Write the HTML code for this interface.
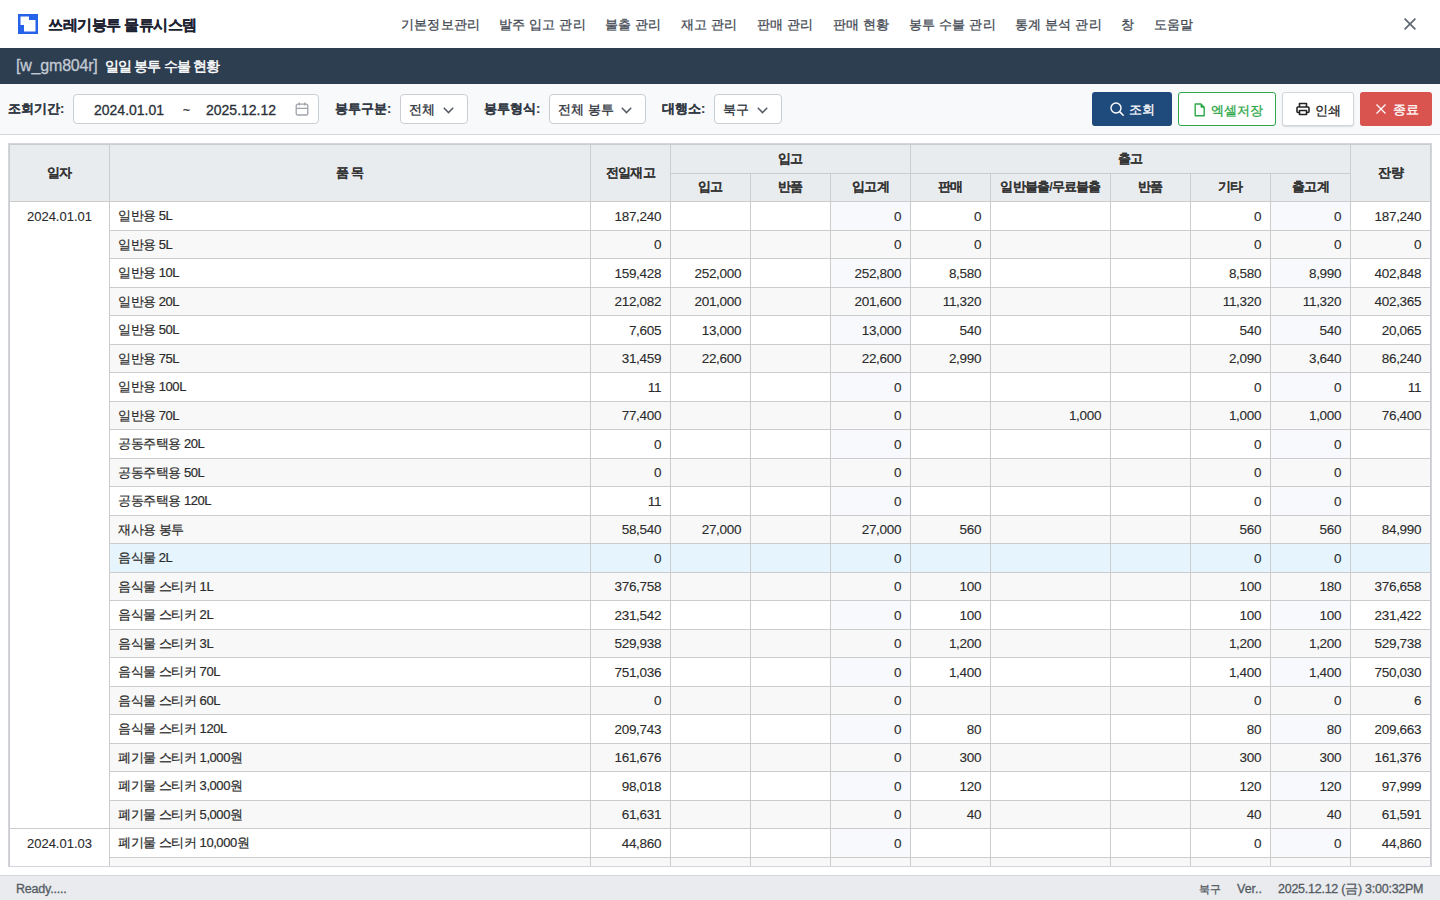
<!DOCTYPE html>
<html lang="ko"><head><meta charset="utf-8"><title>일일 봉투 수불 현황</title>
<style>
*{box-sizing:border-box;margin:0;padding:0}
html,body{width:1440px;height:900px;overflow:hidden;background:#fff;font-family:"Liberation Sans",sans-serif;color:#333}
body{-webkit-text-stroke-width:0.3px}
.top{position:absolute;left:0;top:0;width:1440px;height:48px;background:#fff}
.logo{position:absolute;left:18px;top:14px;width:20px;height:20px}
.brand{position:absolute;left:48px;top:13px;font-size:15px;letter-spacing:-0.5px;font-weight:bold;color:#1c2230;line-height:24px;white-space:nowrap}
.menu{position:absolute;top:13px;font-size:13px;letter-spacing:0.2px;color:#454b55;line-height:24px;white-space:nowrap}
.close{position:absolute;left:1404px;top:18px;width:12px;height:12px}
.bar{position:absolute;left:0;top:48px;width:1440px;height:36px;background:#2c3e50}
.bar .code{position:absolute;left:16px;top:8px;font-size:16px;letter-spacing:-0.2px;color:#c3cad3;line-height:20px;white-space:nowrap}
.bar .ttl{position:absolute;left:105px;top:8px;font-size:14px;letter-spacing:-0.85px;color:#fff;font-weight:normal;-webkit-text-stroke-width:0.45px;line-height:20px;white-space:nowrap}
.tool{position:absolute;left:0;top:84px;width:1440px;height:51px;background:#f8f9fa;border-bottom:1px solid #d5d9de}
.lbl{position:absolute;top:15px;font-size:13px;letter-spacing:0px;font-weight:bold;color:#333a44;line-height:20px;white-space:nowrap}
.box{position:absolute;top:10px;height:30px;background:#fff;border:1px solid #c9cdd4;border-radius:4px}
.txt{position:absolute;top:5px;font-size:13px;color:#2a2f38;line-height:20px;white-space:nowrap}
.chev{position:absolute;top:12px;width:11px;height:7px}
.btn{position:absolute;top:8px;height:34px;border-radius:3px}
.btn span{position:absolute;top:8px;font-size:13px;line-height:20px;white-space:nowrap}
.btn svg{position:absolute}
.grid{position:absolute;left:8px;top:143px;width:1424px;height:724px;border:1px solid #d2d6dc;overflow:hidden;background:#fff}
table{border-collapse:collapse;table-layout:fixed;width:1422px;font-size:13px}
th,td{border:1px solid #cccccc;white-space:nowrap;overflow:hidden}
th{background:#e9ecef;font-weight:bold;font-size:12.5px;letter-spacing:-0.8px;color:#333;text-align:center}
tr.h1 th{height:29px}
tr.h2 th{height:28px}
td{height:28.5px;padding:1px 8px 0 8px;color:#2b2b2b}
td.n{text-align:right;font-size:13.5px;letter-spacing:-0.3px;-webkit-text-stroke-width:0.1px;padding-right:8.8px}
td.it{letter-spacing:-0.45px;-webkit-text-stroke-width:0.2px}
td.dt{-webkit-text-stroke-width:0.1px;text-align:center;vertical-align:top;padding-top:7px;background:#fff}
tr.ev td{background:#f8f8f8}
td.hc{background:#f7f9fc}
tr.ev td.hc{background:#f8f8f9}
tr.sel td{background:#e6f5fd}
tr td.dt{background:#fff}
.status{position:absolute;left:0;top:875px;width:1440px;height:25px;background:#e9ebee;border-top:1px solid #d3d7dc;font-size:12.5px;color:#555b63}
.ready{position:absolute;left:16px;top:4px;line-height:18px;letter-spacing:-0.2px}
.sr span{position:absolute;top:4px;line-height:18px;white-space:nowrap}
.s1{left:1199px;font-size:11px}.s2{left:1237px}.s3{left:1278px;letter-spacing:-0.25px}

.brand,.lbl{-webkit-text-stroke-width:0.15px}
th{-webkit-text-stroke-width:0.01px}

</style></head><body>
<div class="top">
<svg class="logo" viewBox="0 0 20 20"><rect width="20" height="20" fill="#2563eb"/><path d="M2.5 2.5H11V6H17.5V17.5H6V11H2.5Z" fill="#fff"/></svg>
<div class="brand">쓰레기봉투 물류시스템</div>
<div class="menu" style="left:401px">기본정보관리</div>
<div class="menu" style="left:499px">발주 입고 관리</div>
<div class="menu" style="left:605px">불출 관리</div>
<div class="menu" style="left:681px">재고 관리</div>
<div class="menu" style="left:757px">판매 관리</div>
<div class="menu" style="left:833px">판매 현황</div>
<div class="menu" style="left:909px">봉투 수불 관리</div>
<div class="menu" style="left:1015px">통계 분석 관리</div>
<div class="menu" style="left:1121px">창</div>
<div class="menu" style="left:1154px">도움말</div>
<svg class="close" viewBox="0 0 12 12"><path d="M0.6 0.6L11.4 11.4M11.4 0.6L0.6 11.4" stroke="#5d6371" stroke-width="1.6"/></svg>
</div>
<div class="bar"><span class="code">[w_gm804r]</span><span class="ttl">일일 봉투 수불 현황</span></div>
<div class="tool">
<div class="lbl" style="left:8px">조회기간:</div>
<div class="box" style="left:73px;width:246px">
<span class="txt" style="left:20px;font-size:14px">2024.01.01</span>
<span class="txt" style="left:109px;font-size:12px">~</span>
<span class="txt" style="left:132px;font-size:14px">2025.12.12</span>
<svg style="position:absolute;left:221px;top:7px" width="14" height="14" viewBox="0 0 14 14"><rect x="1.2" y="2.2" width="11.6" height="10.8" rx="1.6" fill="none" stroke="#9ea3aa" stroke-width="1.3"/><path d="M1.2 6.3H12.8M4.3 0.6V3.6M9.7 0.6V3.6" stroke="#9ea3aa" stroke-width="1.3"/></svg>
</div>
<div class="lbl" style="left:335px">봉투구분:</div>
<div class="box" style="left:400px;width:68px"><span class="txt" style="left:8px">전체</span><svg class="chev" style="left:42px" viewBox="0 0 11 7"><path d="M0.8 0.8L5.5 5.6L10.2 0.8" fill="none" stroke="#555c66" stroke-width="1.5"/></svg></div>
<div class="lbl" style="left:484px">봉투형식:</div>
<div class="box" style="left:549px;width:97px"><span class="txt" style="left:8px">전체 봉투</span><svg class="chev" style="left:71px" viewBox="0 0 11 7"><path d="M0.8 0.8L5.5 5.6L10.2 0.8" fill="none" stroke="#555c66" stroke-width="1.5"/></svg></div>
<div class="lbl" style="left:662px">대행소:</div>
<div class="box" style="left:714px;width:68px"><span class="txt" style="left:8px">북구</span><svg class="chev" style="left:42px" viewBox="0 0 11 7"><path d="M0.8 0.8L5.5 5.6L10.2 0.8" fill="none" stroke="#555c66" stroke-width="1.5"/></svg></div>

<div class="btn" style="left:1092px;width:80px;background:#1f4b7c">
<svg style="left:18px;top:10px" width="14" height="14" viewBox="0 0 14 14"><circle cx="6" cy="6" r="5" fill="none" stroke="#fff" stroke-width="1.4"/><path d="M9.6 9.6L13.2 13.2" stroke="#fff" stroke-width="1.5" stroke-linecap="round"/></svg>
<span style="left:37px;color:#fff">조회</span></div>
<div class="btn" style="left:1178px;width:98px;background:#fff;border:1.5px solid #2ea84a">
<svg style="left:14.5px;top:9.5px" width="12" height="14" viewBox="0 0 12 14"><path d="M1.2 1H7L10.2 4.2V12.8H1.2Z" fill="none" stroke="#2ea84a" stroke-width="1.4" stroke-linejoin="round"/><path d="M7 1V4.2H10.2Z" fill="#2ea84a" stroke="#2ea84a" stroke-width="1" stroke-linejoin="round"/></svg>
<span style="left:32px;color:#2ea84a">엑셀저장</span></div>
<div class="btn" style="left:1282px;width:72px;background:#fff;border:1px solid #d3d7dc;box-shadow:0 1px 1.5px rgba(0,0,0,0.12)">
<svg style="left:13px;top:9px" width="14" height="14" viewBox="0 0 14 14"><path d="M3.5 5V1.5H10.5V5M3.5 10.5H2A1 1 0 0 1 1 9.5V6A1 1 0 0 1 2 5H12A1 1 0 0 1 13 6V9.5A1 1 0 0 1 12 10.5H10.5M3.5 8.5H10.5V12.5H3.5Z" fill="none" stroke="#222" stroke-width="1.6" stroke-linejoin="round"/></svg>
<span style="left:32px;color:#222">인쇄</span></div>
<div class="btn" style="left:1360px;width:72px;background:#d9534f">
<svg style="left:16px;top:12px" width="10" height="10" viewBox="0 0 10 10"><path d="M0.5 0.5L9.5 9.5M9.5 0.5L0.5 9.5" stroke="#fff" stroke-width="1.3"/></svg>
<span style="left:33px;color:#fff">종료</span></div>
</div>

<div class="grid"><table>
<colgroup><col style="width:100px"><col style="width:481px"><col style="width:80px"><col style="width:80px"><col style="width:80px"><col style="width:80px"><col style="width:80px"><col style="width:120px"><col style="width:80px"><col style="width:80px"><col style="width:80px"><col style="width:80px"></colgroup>
<thead>
<tr class="h1"><th rowspan="2">일자</th><th rowspan="2">품 목</th><th rowspan="2">전일재고</th><th colspan="3">입고</th><th colspan="5">출고</th><th rowspan="2">잔량</th></tr>
<tr class="h2"><th>입고</th><th>반품</th><th>입고계</th><th>판매</th><th>일반불출/무료불출</th><th>반품</th><th>기타</th><th>출고계</th></tr>
</thead>
<tbody>
<tr><td class="dt" rowspan="22">2024.01.01</td><td class="it">일반용 5L</td><td class="n">187,240</td><td class="n"></td><td class="n"></td><td class="n hc">0</td><td class="n">0</td><td class="n"></td><td class="n"></td><td class="n">0</td><td class="n hc">0</td><td class="n">187,240</td></tr>
<tr class="ev"><td class="it">일반용 5L</td><td class="n">0</td><td class="n"></td><td class="n"></td><td class="n hc">0</td><td class="n">0</td><td class="n"></td><td class="n"></td><td class="n">0</td><td class="n hc">0</td><td class="n">0</td></tr>
<tr><td class="it">일반용 10L</td><td class="n">159,428</td><td class="n">252,000</td><td class="n"></td><td class="n hc">252,800</td><td class="n">8,580</td><td class="n"></td><td class="n"></td><td class="n">8,580</td><td class="n hc">8,990</td><td class="n">402,848</td></tr>
<tr class="ev"><td class="it">일반용 20L</td><td class="n">212,082</td><td class="n">201,000</td><td class="n"></td><td class="n hc">201,600</td><td class="n">11,320</td><td class="n"></td><td class="n"></td><td class="n">11,320</td><td class="n hc">11,320</td><td class="n">402,365</td></tr>
<tr><td class="it">일반용 50L</td><td class="n">7,605</td><td class="n">13,000</td><td class="n"></td><td class="n hc">13,000</td><td class="n">540</td><td class="n"></td><td class="n"></td><td class="n">540</td><td class="n hc">540</td><td class="n">20,065</td></tr>
<tr class="ev"><td class="it">일반용 75L</td><td class="n">31,459</td><td class="n">22,600</td><td class="n"></td><td class="n hc">22,600</td><td class="n">2,990</td><td class="n"></td><td class="n"></td><td class="n">2,090</td><td class="n hc">3,640</td><td class="n">86,240</td></tr>
<tr><td class="it">일반용 100L</td><td class="n">11</td><td class="n"></td><td class="n"></td><td class="n hc">0</td><td class="n"></td><td class="n"></td><td class="n"></td><td class="n">0</td><td class="n hc">0</td><td class="n">11</td></tr>
<tr class="ev"><td class="it">일반용 70L</td><td class="n">77,400</td><td class="n"></td><td class="n"></td><td class="n hc">0</td><td class="n"></td><td class="n">1,000</td><td class="n"></td><td class="n">1,000</td><td class="n hc">1,000</td><td class="n">76,400</td></tr>
<tr><td class="it">공동주택용 20L</td><td class="n">0</td><td class="n"></td><td class="n"></td><td class="n hc">0</td><td class="n"></td><td class="n"></td><td class="n"></td><td class="n">0</td><td class="n hc">0</td><td class="n"></td></tr>
<tr class="ev"><td class="it">공동주택용 50L</td><td class="n">0</td><td class="n"></td><td class="n"></td><td class="n hc">0</td><td class="n"></td><td class="n"></td><td class="n"></td><td class="n">0</td><td class="n hc">0</td><td class="n"></td></tr>
<tr><td class="it">공동주택용 120L</td><td class="n">11</td><td class="n"></td><td class="n"></td><td class="n hc">0</td><td class="n"></td><td class="n"></td><td class="n"></td><td class="n">0</td><td class="n hc">0</td><td class="n"></td></tr>
<tr class="ev"><td class="it">재사용 봉투</td><td class="n">58,540</td><td class="n">27,000</td><td class="n"></td><td class="n hc">27,000</td><td class="n">560</td><td class="n"></td><td class="n"></td><td class="n">560</td><td class="n hc">560</td><td class="n">84,990</td></tr>
<tr class="sel"><td class="it">음식물 2L</td><td class="n">0</td><td class="n"></td><td class="n"></td><td class="n hc">0</td><td class="n"></td><td class="n"></td><td class="n"></td><td class="n">0</td><td class="n hc">0</td><td class="n"></td></tr>
<tr class="ev"><td class="it">음식물 스티커 1L</td><td class="n">376,758</td><td class="n"></td><td class="n"></td><td class="n hc">0</td><td class="n">100</td><td class="n"></td><td class="n"></td><td class="n">100</td><td class="n hc">180</td><td class="n">376,658</td></tr>
<tr><td class="it">음식물 스티커 2L</td><td class="n">231,542</td><td class="n"></td><td class="n"></td><td class="n hc">0</td><td class="n">100</td><td class="n"></td><td class="n"></td><td class="n">100</td><td class="n hc">100</td><td class="n">231,422</td></tr>
<tr class="ev"><td class="it">음식물 스티커 3L</td><td class="n">529,938</td><td class="n"></td><td class="n"></td><td class="n hc">0</td><td class="n">1,200</td><td class="n"></td><td class="n"></td><td class="n">1,200</td><td class="n hc">1,200</td><td class="n">529,738</td></tr>
<tr><td class="it">음식물 스티커 70L</td><td class="n">751,036</td><td class="n"></td><td class="n"></td><td class="n hc">0</td><td class="n">1,400</td><td class="n"></td><td class="n"></td><td class="n">1,400</td><td class="n hc">1,400</td><td class="n">750,030</td></tr>
<tr class="ev"><td class="it">음식물 스티커 60L</td><td class="n">0</td><td class="n"></td><td class="n"></td><td class="n hc">0</td><td class="n"></td><td class="n"></td><td class="n"></td><td class="n">0</td><td class="n hc">0</td><td class="n">6</td></tr>
<tr><td class="it">음식물 스티커 120L</td><td class="n">209,743</td><td class="n"></td><td class="n"></td><td class="n hc">0</td><td class="n">80</td><td class="n"></td><td class="n"></td><td class="n">80</td><td class="n hc">80</td><td class="n">209,663</td></tr>
<tr class="ev"><td class="it">폐기물 스티커 1,000원</td><td class="n">161,676</td><td class="n"></td><td class="n"></td><td class="n hc">0</td><td class="n">300</td><td class="n"></td><td class="n"></td><td class="n">300</td><td class="n hc">300</td><td class="n">161,376</td></tr>
<tr><td class="it">폐기물 스티커 3,000원</td><td class="n">98,018</td><td class="n"></td><td class="n"></td><td class="n hc">0</td><td class="n">120</td><td class="n"></td><td class="n"></td><td class="n">120</td><td class="n hc">120</td><td class="n">97,999</td></tr>
<tr class="ev"><td class="it">폐기물 스티커 5,000원</td><td class="n">61,631</td><td class="n"></td><td class="n"></td><td class="n hc">0</td><td class="n">40</td><td class="n"></td><td class="n"></td><td class="n">40</td><td class="n hc">40</td><td class="n">61,591</td></tr>
<tr><td class="dt" rowspan="2">2024.01.03</td><td class="it">폐기물 스티커 10,000원</td><td class="n">44,860</td><td class="n"></td><td class="n"></td><td class="n hc">0</td><td class="n"></td><td class="n"></td><td class="n"></td><td class="n">0</td><td class="n hc">0</td><td class="n">44,860</td></tr>
<tr class="ev"><td class="it"></td><td class="n"></td><td class="n"></td><td class="n"></td><td class="n hc"></td><td class="n"></td><td class="n"></td><td class="n"></td><td class="n"></td><td class="n hc"></td><td class="n"></td></tr>
</tbody></table></div>
<div class="status"><span class="ready">Ready.....</span><span class="sr"><span class="s1">북구</span><span class="s2">Ver..</span><span class="s3">2025.12.12 (금) 3:00:32PM</span></span></div>
</body></html>
